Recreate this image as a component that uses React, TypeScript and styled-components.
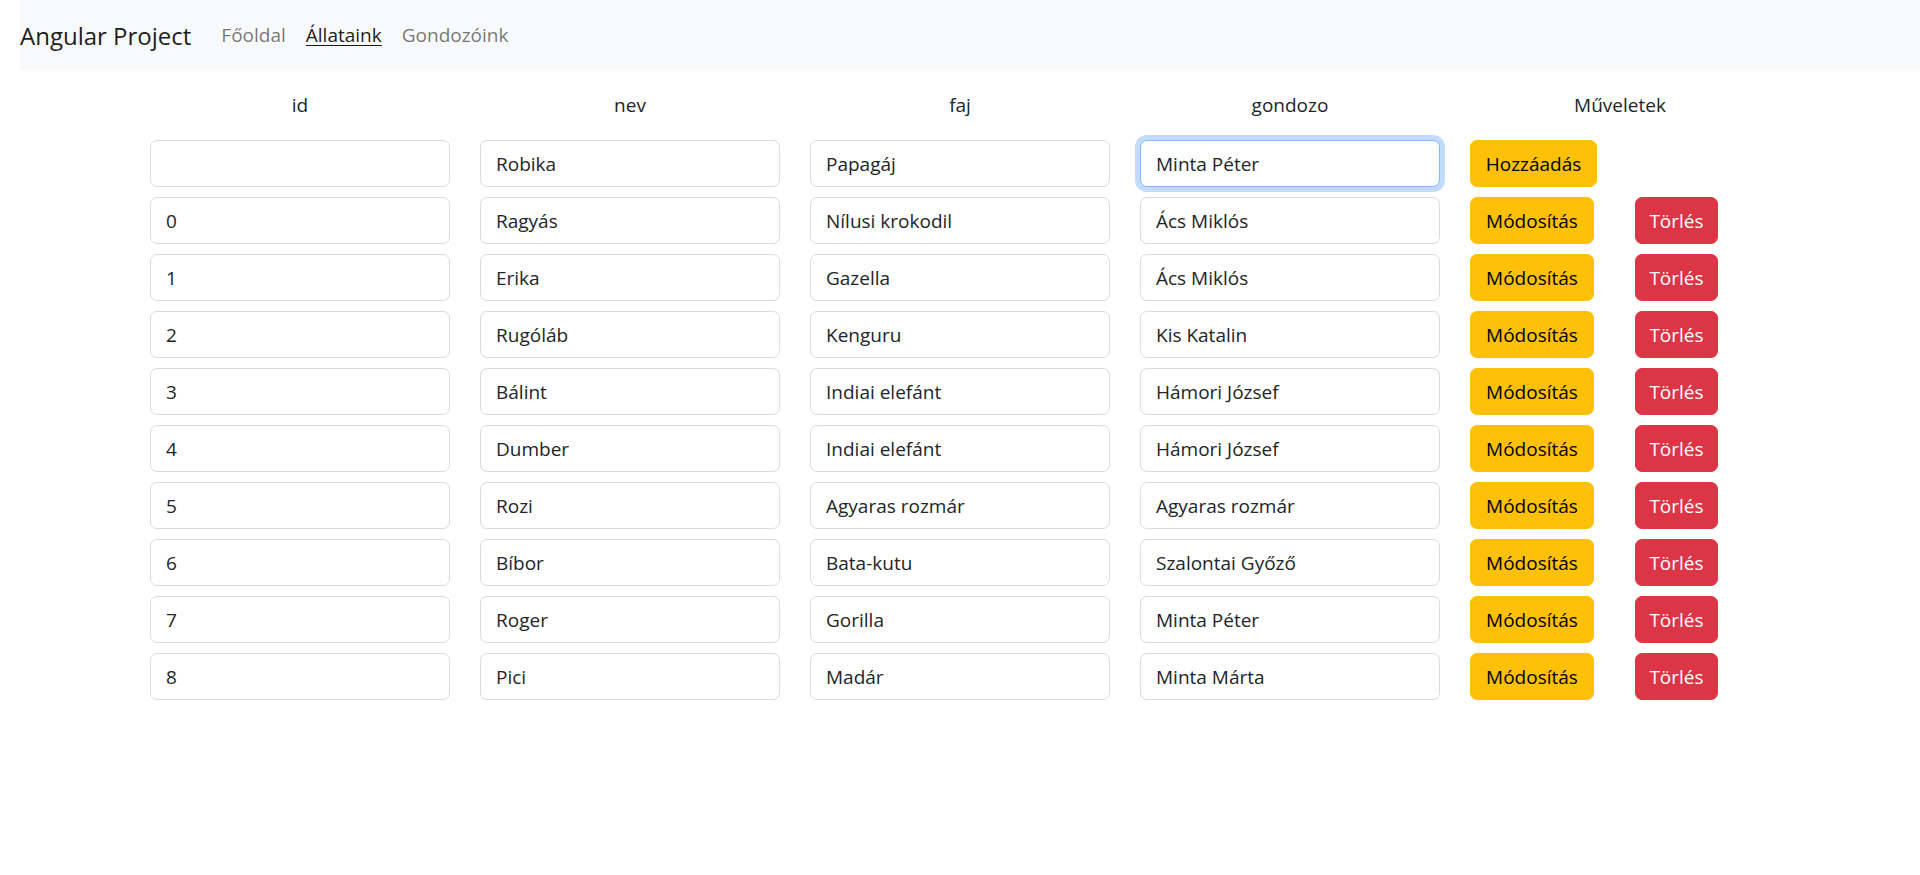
import React from "react";
import styled, { createGlobalStyle, css } from "styled-components";

const GlobalStyle = createGlobalStyle`
  body {
    margin: 0;
    background: #fff;
    color: #212529;
    font-family: "Open Sans", "Noto Sans", "Liberation Sans", sans-serif;
  }
`;

const Navbar = styled("nav")`
  margin-left: 20px;
  height: 70px;
  background-color: #f8f9fa;
  display: flex;
  align-items: center;
`;

const Brand = styled("a")`
  font-size: 24px;
  color: rgba(0, 0, 0, 0.9);
  margin-right: 20px;
`;

const NavLink = styled("a")<{ $active?: boolean }>`
  font-size: 19px;
  padding: 10px;
  color: rgba(0, 0, 0, 0.55);
  ${(p) =>
    p.$active &&
    css`
      color: rgba(0, 0, 0, 0.9);
      text-decoration: underline;
      text-underline-offset: 3px;
    `}
`;

const Table = styled("div")`
  width: 1620px;
  margin: 20px auto 0;
  display: grid;
  grid-template-columns: repeat(5, 300px);
  column-gap: 30px;
  row-gap: 10px;
`;

const HeadCell = styled("div")`
  font-size: 19px;
  line-height: 30px;
  text-align: center;
  padding-bottom: 10px;
  color: #212529;
`;

const Input = styled("input")<{ $focus?: boolean }>`
  box-sizing: border-box;
  width: 300px;
  height: 47px;
  padding: 0 15px;
  font-family: inherit;
  font-size: 19px;
  color: #212529;
  background: #fff;
  border: 1px solid #d8dbdf;
  border-radius: 7px;
  outline: none;
  ${(p) =>
    p.$focus &&
    css`
      border-color: #86b7fe;
      box-shadow: 0 0 0 5px rgba(13, 110, 253, 0.25);
    `}
`;

const Actions = styled("div")`
  display: flex;
  gap: 41px;
`;

const Button = styled("button")<{ $kind: "warning" | "danger"; $w: number }>`
  box-sizing: border-box;
  width: ${(p) => p.$w}px;
  height: 47px;
  padding: 0;
  font-family: inherit;
  font-size: 19px;
  border: 1px solid transparent;
  border-radius: 7px;
  cursor: pointer;
  ${(p) =>
    p.$kind === "warning"
      ? css`
          background: #ffc107;
          border-color: #ffc107;
          color: #000;
        `
      : css`
          background: #dc3545;
          border-color: #dc3545;
          color: #fff;
        `}
`;

const animals = [
  { id: 0, nev: "Ragyás", faj: "Nílusi krokodil", gondozo: "Ács Miklós" },
  { id: 1, nev: "Erika", faj: "Gazella", gondozo: "Ács Miklós" },
  { id: 2, nev: "Rugóláb", faj: "Kenguru", gondozo: "Kis Katalin" },
  { id: 3, nev: "Bálint", faj: "Indiai elefánt", gondozo: "Hámori József" },
  { id: 4, nev: "Dumber", faj: "Indiai elefánt", gondozo: "Hámori József" },
  { id: 5, nev: "Rozi", faj: "Agyaras rozmár", gondozo: "Agyaras rozmár" },
  { id: 6, nev: "Bíbor", faj: "Bata-kutu", gondozo: "Szalontai Győző" },
  { id: 7, nev: "Roger", faj: "Gorilla", gondozo: "Minta Péter" },
  { id: 8, nev: "Pici", faj: "Madár", gondozo: "Minta Márta" },
];

function App() {
  return (
    <>
      <GlobalStyle />
      <Navbar>
        <Brand>Angular Project</Brand>
        <NavLink>Főoldal</NavLink>
        <NavLink $active>Állataink</NavLink>
        <NavLink>Gondozóink</NavLink>
      </Navbar>
      <Table>
        <HeadCell>id</HeadCell>
        <HeadCell>nev</HeadCell>
        <HeadCell>faj</HeadCell>
        <HeadCell>gondozo</HeadCell>
        <HeadCell>Műveletek</HeadCell>

        <Input defaultValue="" />
        <Input defaultValue="Robika" />
        <Input defaultValue="Papagáj" />
        <Input defaultValue="Minta Péter" $focus />
        <Actions>
          <Button $kind="warning" $w={127}>
            Hozzáadás
          </Button>
        </Actions>

        {animals.map((a) => (
          <React.Fragment key={a.id}>
            <Input defaultValue={String(a.id)} />
            <Input defaultValue={a.nev} />
            <Input defaultValue={a.faj} />
            <Input defaultValue={a.gondozo} />
            <Actions>
              <Button $kind="warning" $w={124}>
                Módosítás
              </Button>
              <Button $kind="danger" $w={83}>
                Törlés
              </Button>
            </Actions>
          </React.Fragment>
        ))}
      </Table>
    </>
  );
}

export default App;
